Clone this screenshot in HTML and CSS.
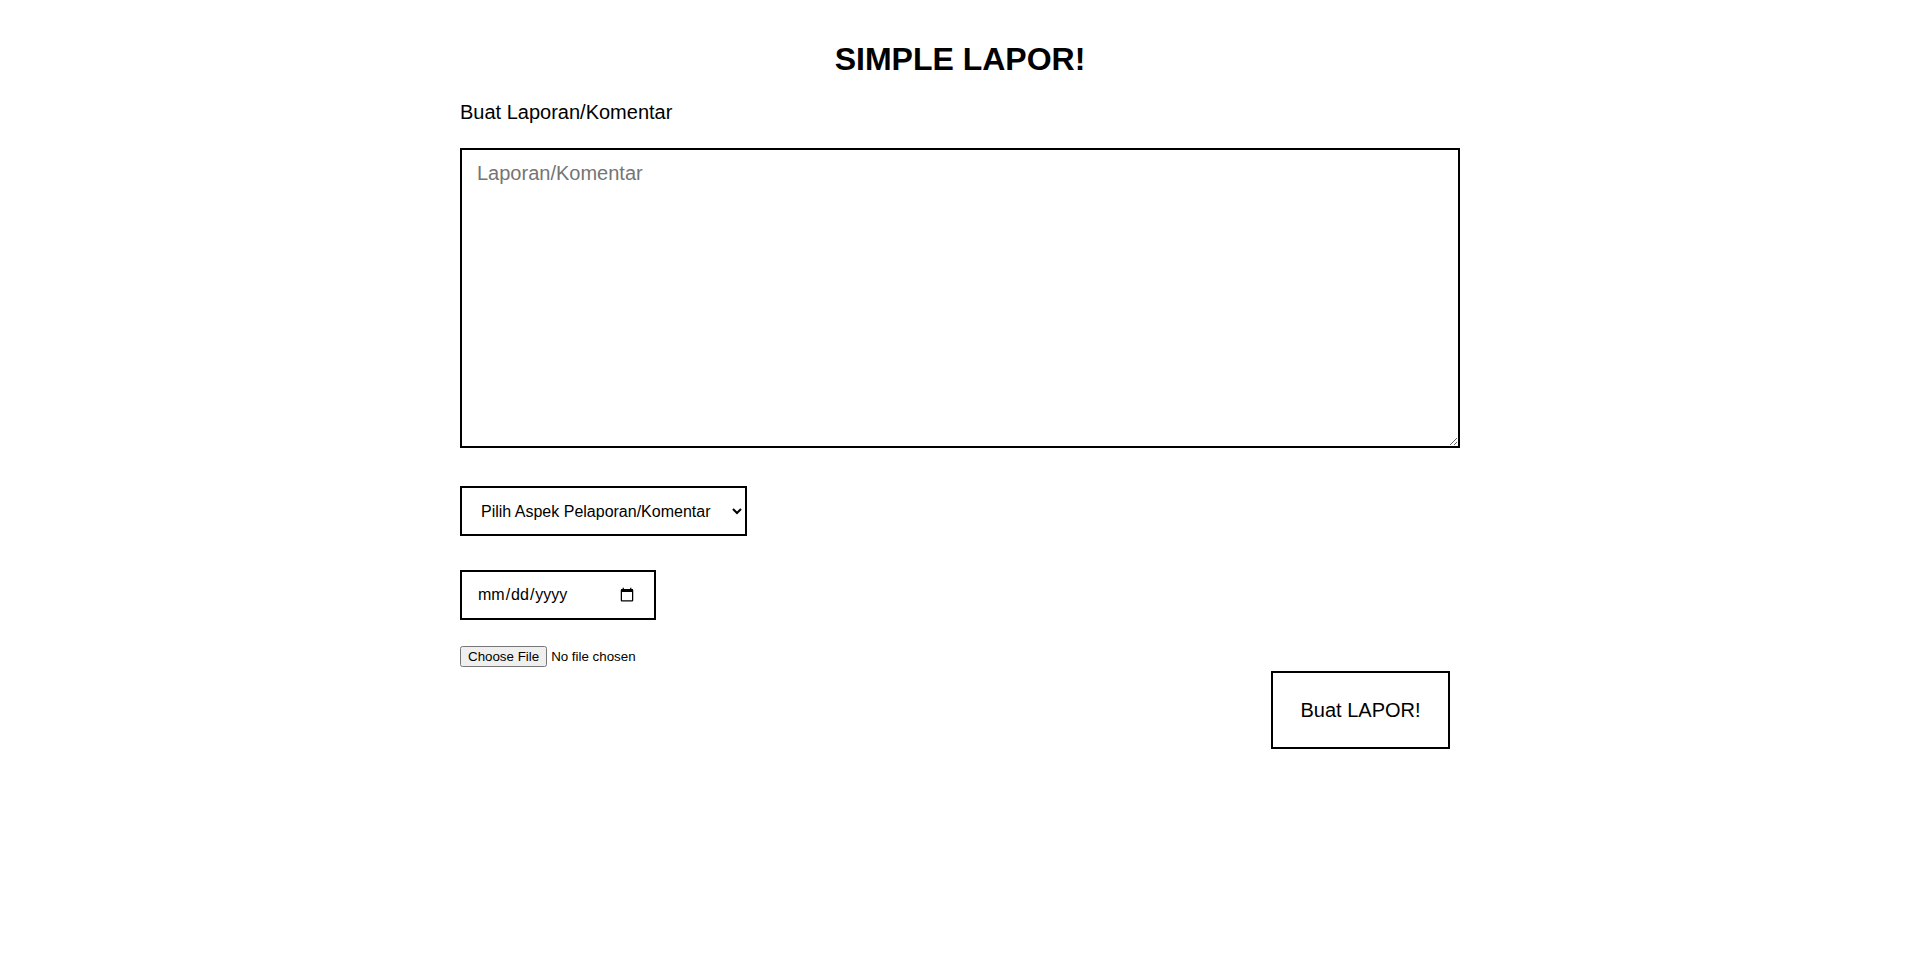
FILE: index.html
```html
<!DOCTYPE html>
<html lang="id">
<head>
<meta charset="utf-8">
<title>Simple Lapor!</title>
<link rel="stylesheet" href="styles.css">
</head>
<body>
<div class="page">
  <h1 class="title">SIMPLE LAPOR!</h1>
  <form class="form">
    <label class="label" for="laporan">Buat Laporan/Komentar</label>
    <textarea id="laporan" class="textarea" placeholder="Laporan/Komentar"></textarea>
    <select class="select">
      <option>Pilih Aspek Pelaporan/Komentar</option>
    </select>
    <input class="date" type="date">
    <input class="file" type="file">
    <div class="actions">
      <button type="button" class="submit">Buat LAPOR!</button>
    </div>
  </form>
</div>
</body>
</html>
```
FILE: styles.css
```css
html, body {
  margin: 0;
  background: #fff;
}
body {
  font-family: "Liberation Sans", Arial, sans-serif;
  color: #000;
}
.page {
  width: 1000px;
  margin: 0 auto;
  padding-left: 7px;
}
.title {
  font-size: 32px;
  font-weight: bold;
  text-align: center;
  margin: 41px 0 0;
  line-height: 37px;
}
.form {
  display: flex;
  flex-direction: column;
  align-items: flex-start;
}
.label {
  font-size: 20px;
  line-height: 23px;
  margin-top: 23px;
}
.textarea {
  display: block;
  box-sizing: border-box;
  width: 1000px;
  height: 300px;
  margin: 24px 0 0;
  border: 2px solid #000;
  padding: 12px 15px;
  font-family: "Liberation Sans", Arial, sans-serif;
  font-size: 20px;
  line-height: 23px;
  color: #000;
  background: #fff;
}
.textarea::placeholder {
  color: #757575;
}
.select {
  box-sizing: border-box;
  height: 50px;
  margin: 38px 0 0;
  border: 2px solid #000;
  border-radius: 0;
  padding: 0 17px 0 15px;
  font-family: "Liberation Sans", Arial, sans-serif;
  font-size: 16px;
  color: #000;
  background: #fff;
}
.date {
  box-sizing: border-box;
  width: 196px;
  height: 50px;
  margin: 34px 0 0;
  border: 2px solid #000;
  border-radius: 0;
  padding: 0 17px 0 15px;
  font-family: "Liberation Sans", Arial, sans-serif;
  font-size: 16px;
  color: #000;
  background: #fff;
}
.file {
  margin: 26px 0 0;
  font-family: "Liberation Sans", Arial, sans-serif;
  font-size: 13.333px;
}
.actions {
  align-self: stretch;
  display: flex;
  justify-content: flex-end;
  margin-top: 4px;
  padding-right: 10px;
}
.submit {
  box-sizing: border-box;
  width: 179px;
  height: 78px;
  border: 2px solid #000;
  border-radius: 0;
  background: #fff;
  font-family: "Liberation Sans", Arial, sans-serif;
  font-size: 20px;
  color: #000;
  padding: 0;
}
```
